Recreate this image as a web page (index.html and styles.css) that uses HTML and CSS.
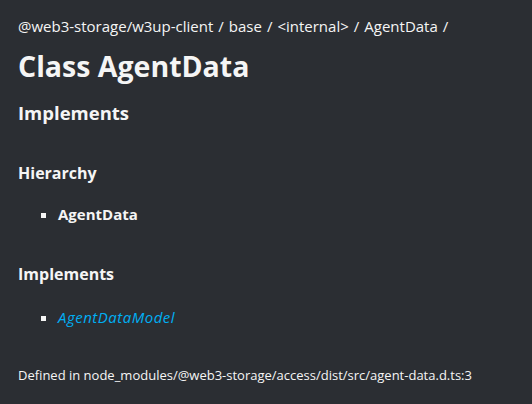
FILE: index.html
```html
<!DOCTYPE html>
<html>
<head>
<meta charset="utf-8">
<link rel="stylesheet" href="styles.css">
</head>
<body>
<div class="page">
  <ul class="crumbs">
    <li>@web3-storage/w3up-client</li>
    <li>base</li>
    <li>&lt;internal&gt;</li>
    <li>AgentData</li>
  </ul>
  <h1 class="title">Class AgentData</h1>
  <h2 class="sub">Implements</h2>
  <section class="group">
    <h4 class="group-title">Hierarchy</h4>
    <ul class="list">
      <li><span class="target">AgentData</span></li>
    </ul>
  </section>
  <section class="group group-next">
    <h4 class="group-title">Implements</h4>
    <ul class="list list-next">
      <li><a class="iface" href="#">AgentDataModel</a></li>
    </ul>
  </section>
  <p class="defined">Defined in node_modules/@web3-storage/access/dist/src/agent-data.d.ts:3</p>
</div>
</body>
</html>
```
FILE: styles.css
```css
html, body {
  margin: 0;
  padding: 0;
  background: #2b2e33;
  color: #f5f5f5;
  font-family: "Open Sans", sans-serif;
}
.page {
  padding: 16px 18px;
}
.crumbs {
  list-style: none;
  margin: 0;
  padding: 0;
  display: flex;
  font-size: 15px;
  line-height: 20px;
}
.crumbs li::after {
  content: "/";
  margin: 0 5px;
}
.title {
  margin: 10px 0 0;
  font-size: 28.5px;
  line-height: 40px;
  font-weight: 700;
}
.sub {
  margin: 14px 0 0;
  font-size: 18.5px;
  line-height: 26px;
  font-weight: 700;
}
.group {
  margin-top: 36px;
}
.group-next {
  margin-top: 38px;
}
.group-title {
  margin: 0;
  font-size: 16px;
  line-height: 22px;
  font-weight: 700;
}
.list {
  list-style: square;
  margin: 19px 0 0;
  padding-left: 40px;
  font-size: 15px;
  line-height: 22px;
}
.list-next {
  margin-top: 21px;
}
.target {
  font-weight: 700;
}
.iface {
  color: #00aff4;
  font-style: italic;
  text-decoration: none;
  letter-spacing: 0.5px;
}
.defined {
  margin: 37px 0 0;
  font-size: 13px;
  line-height: 20px;
}
```
